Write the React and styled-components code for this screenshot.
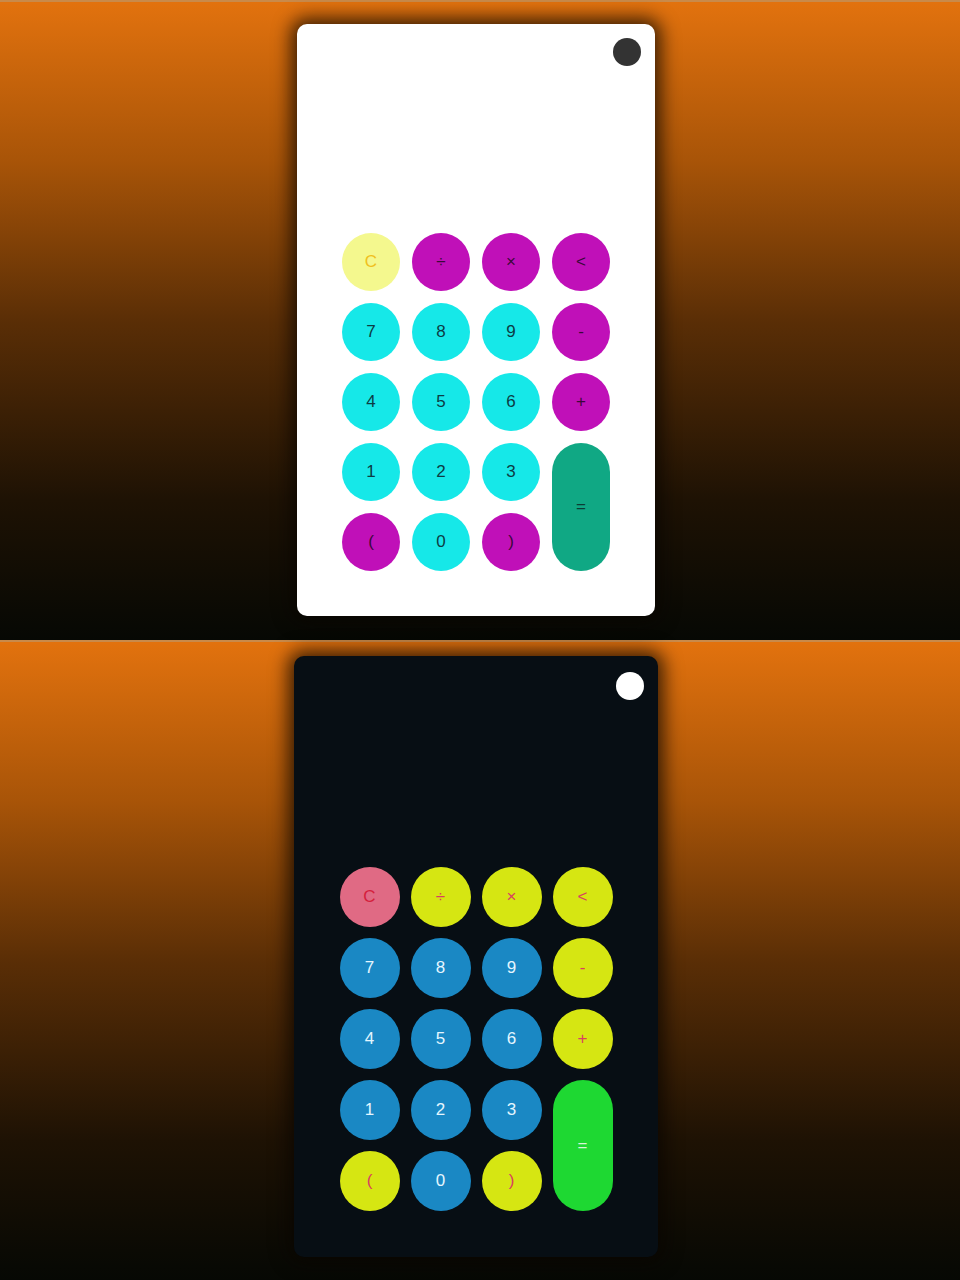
import React from "react";
import styled, { createGlobalStyle } from "styled-components";

const GlobalStyle = createGlobalStyle`
  body {
    margin: 0;
    font-family: Roboto, "Liberation Sans", Arial, sans-serif;
    background: #050805;
  }
`;

const themes = {
  light: {
    card: "#ffffff",
    toggle: "#333333",
    clear: ["#f4f88e", "#f0c020"],
    op: ["#c010b8", "#3a0838"],
    num: ["#16e8e8", "#0c3c44"],
    eq: ["#10a884", "#0c3c34"],
  },
  dark: {
    card: "#070e14",
    toggle: "#ffffff",
    clear: ["#e06a84", "#d4203c"],
    op: ["#d6e612", "#d84060"],
    num: ["#1a88c4", "#e4f6ff"],
    eq: ["#1ed832", "#d8f4d8"],
  },
};

const keys = [
  ["C", "clear"], ["÷", "op"], ["×", "op"], ["<", "op"],
  ["7", "num"], ["8", "num"], ["9", "num"], ["-", "op"],
  ["4", "num"], ["5", "num"], ["6", "num"], ["+", "op"],
  ["1", "num"], ["2", "num"], ["3", "num"], ["=", "eq"],
  ["(", "op"], ["0", "num"], [")", "op"],
];

const Panel = styled.section`
  height: 640px;
  display: flex;
  justify-content: center;
  align-items: flex-start;
  padding: ${(p) => p.$top}px 8px 0 0;
  box-sizing: border-box;
  background: linear-gradient(to bottom, #e2720e 0%, #a85408 25%, #5a2e06 50%, #1e1204 78%, #060804 100%);
  border-top: 2px solid #c98a4a;
`;

const Card = styled.div`
  width: ${(p) => p.$w}px;
  height: ${(p) => p.$h}px;
  background: ${(p) => p.$bg};
  border-radius: 10px;
  box-shadow: 0 0 18px 6px rgba(10, 6, 0, 0.75);
  box-sizing: border-box;
  padding: ${(p) => p.$padTop}px 14px 0;
  display: flex;
  flex-direction: column;
`;

const TopBar = styled.div`
  display: flex;
  justify-content: flex-end;
  height: 28px;
`;

const Toggle = styled.div`
  width: 28px;
  height: 28px;
  border-radius: 50%;
  background: ${(p) => p.$c};
`;

const Keypad = styled.div`
  margin: auto auto ${(p) => p.$pad}px;
  display: grid;
  grid-template-columns: repeat(4, ${(p) => p.$size}px);
  grid-auto-rows: ${(p) => p.$size}px;
  gap: ${(p) => p.$gap}px;
`;

const Key = styled.button`
  border: none;
  padding: 0;
  border-radius: ${(p) => p.$size / 2}px;
  background: ${(p) => p.$bg};
  color: ${(p) => p.$fg};
  font-family: "Liberation Sans", Arial, sans-serif;
  font-weight: 500;
  font-size: 17px;
  display: flex;
  align-items: center;
  justify-content: center;
  grid-row: ${(p) => (p.$tall ? "span 2" : "auto")};
`;

function Calculator({ mode, w, h, size, gap, pad, top, padTop }) {
  const t = themes[mode];
  return (
    <Panel $top={top}>
      <Card $w={w} $h={h} $bg={t.card} $padTop={padTop}>
        <TopBar>
          <Toggle $c={t.toggle} />
        </TopBar>
        <Keypad $size={size} $gap={gap} $pad={pad}>
          {keys.map(([label, kind]) => (
            <Key
              key={label}
              $size={size}
              $bg={t[kind][0]}
              $fg={t[kind][1]}
              $tall={kind === "eq"}
            >
              {label}
            </Key>
          ))}
        </Keypad>
      </Card>
    </Panel>
  );
}

export default function App() {
  return (
    <>
      <GlobalStyle />
      <Calculator mode="light" w={358} h={592} size={58} gap={12} pad={45} top={22} padTop={14} />
      <Calculator mode="dark" w={364} h={601} size={60} gap={11} pad={46} top={14} padTop={16} />
    </>
  );
}
